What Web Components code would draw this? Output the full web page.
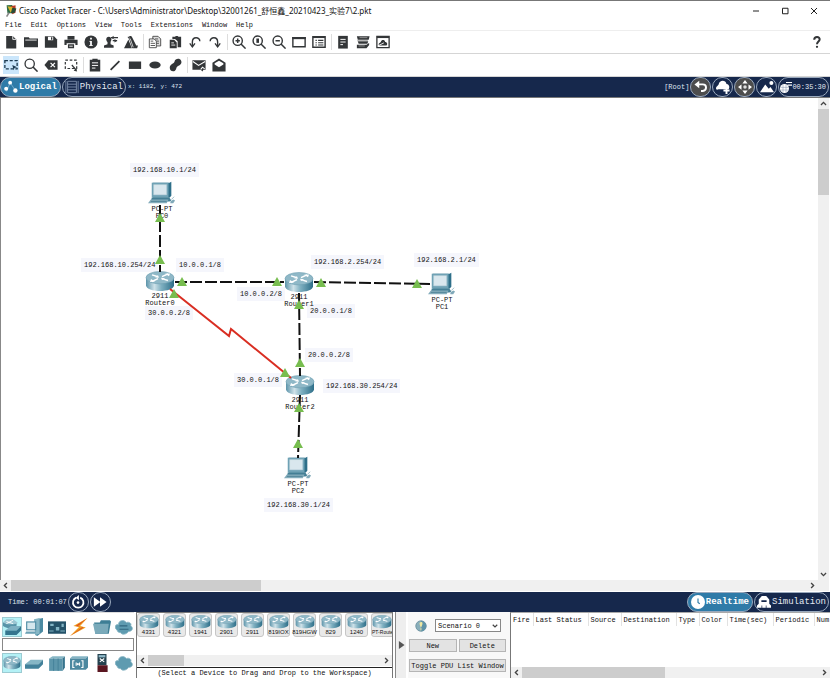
<!DOCTYPE html>
<html lang="en">
<head>
<meta charset="utf-8">
<title>Cisco Packet Tracer</title>
<style>
html,body{margin:0;height:100%}
body{font-family:"Liberation Mono","Noto Sans CJK SC",monospace;font-size:7px;line-height:8px;color:#111;background:#fff;overflow:hidden;
--navy:#16284c;--blue:#2f7ba8;--rail:#f0f0f0;--thumb:#cdcdcd}
</style>
</head>
<body>
<packet-app></packet-app>
<script>
const define = (name, html, setup) => {
  const t = document.createElement('template');
  t.innerHTML = `<style>*{box-sizing:border-box}button,input,select{font:inherit;color:inherit;margin:0;padding:0;border-radius:0}button{border:0;background:none;display:flex;align-items:center;justify-content:center;white-space:nowrap}</style>` + html;
  customElements.define(name, class extends HTMLElement {
    constructor() {
      super();
      this.attachShadow({mode: 'open'}).append(t.content.cloneNode(true));
      if (setup) this.setup = setup;
    }
    connectedCallback() { if (this.setup && !this.ready) { this.ready = true; this.setup(this.shadowRoot); } }
  });
};

/* Glyphs: toolbar icons share a 16x16 grid */
const I = {
  file: '<path fill="#333638" d="M2.500 1h7.500l4 4v10.500H2.500z"/><path d="M10 1v4h4" fill="none" stroke="#fff" stroke-width="1"/>',
  folder: '<path fill="#333638" d="M0 2.500h5.500l1 1.500H16v10H0z"/><path d="M1.500 5.800h13" stroke="#fff" stroke-width="1"/>',
  save: '<path fill="#333638" d="M1 1.500h10.500l3.500 3.500v9.500H1z"/><path fill="#fff" d="M4.500 2h6v4h-6z"/><path fill="#333638" d="M8 2.500h1.500v3H8z"/>',
  print: '<path fill="#333638" d="M4 1h8v4H4zM.5 5.500h15v6H13V9.500H3v2H.5zM4.500 10.500h7V15h-7z"/><path d="M6 12.800h4" stroke="#fff"/>',
  info: '<circle cx="8" cy="8" r="7.500" fill="#333638"/><path d="M8 3v2M8 6.800v5.200" stroke="#fff" stroke-width="2"/><path d="M6.200 7.300H8M6 12h4" stroke="#fff" stroke-width="1"/>',
  user: '<circle cx="5.500" cy="5" r="2.900" fill="#333638"/><path fill="#333638" d="M4 7h3.500v3.500L11 12v2.500H0V12l4-1.500z"/><path d="M8 3h8M10 6.500h5" stroke="#333638" stroke-width="1.300"/><path fill="#333638" d="M11 .8v4L8 3zM12 4.500v4l3-2z"/>',
  wizard: '<path fill="#333638" d="M6 1h2l1 1 5 10h2l-1 3H9.500L6 5zM5 5l4 10H0z"/><path d="M4.500 2L6 4M9 5l2 7" stroke="#333638" stroke-width="1.200"/><path d="M7 4l3.500 10" stroke="#fff" stroke-width=".8"/>',
  copy: '<path fill="#ddd" stroke="#444" d="M5.500 1.500h6l3 3v8h-9zM8 4.500h3.500M9 7h3.500M9 9.500h3.500"/><path fill="#fff" stroke="#444" d="M1.500 4.500h5.500l2.500 2.500v7.500h-8z"/><path stroke="#444" d="M3 7h3M3 9.500h5M3 12h5"/>',
  paste: '<path fill="#333638" d="M5 2h3l1-1h2l1 1h3v12H11V7L8 4.500H5z"/><path fill="#333638" d="M2 5.500h5l3 3V15H2z"/><path d="M3.800 9h3M3.800 11.500h4.500" stroke="#fff"/>',
  undo: '<path fill="none" stroke="#333638" stroke-width="1.600" d="M13.500 7c0-5-8.500-5.500-8.500 1v5"/><path fill="none" stroke="#333638" stroke-width="1.500" d="M2 9.500l3 4 3-4"/>',
  redo: '<path fill="none" stroke="#333638" stroke-width="1.600" d="M2.500 7c0-5 8.500-5.500 8.500 1v5"/><path fill="none" stroke="#333638" stroke-width="1.500" d="M8 9.500l3 4 3-4"/>',
  zoomin: '<circle cx="6.500" cy="6.500" r="5.300" fill="none" stroke="#333638" stroke-width="1.600"/><path d="M10 10l5.500 5.500M6.500 4v5M4 6.500h5" stroke="#333638" stroke-width="1.700"/>',
  zoomreset: '<circle cx="6.500" cy="6.500" r="5.300" fill="none" stroke="#333638" stroke-width="1.600"/><path d="M10 10l5.500 5.500" stroke="#333638" stroke-width="1.700"/><path fill="#333638" d="M5 4h3v5H5z"/>',
  zoomout: '<circle cx="6.500" cy="6.500" r="5.300" fill="none" stroke="#333638" stroke-width="1.600"/><path d="M10 10l5.500 5.500M4 6.500h5" stroke="#333638" stroke-width="1.700"/>',
  rectwin: '<path fill="none" stroke="#333638" stroke-width="1.600" d="M1 3h14v10.500H1z"/><path d="M.2 3.500h15.600" stroke="#333638" stroke-width="2.500"/>',
  list: '<path fill="none" stroke="#333638" stroke-width="1.600" d="M1 2h14v12H1z"/><path d="M1 2.500h14" stroke="#333638" stroke-width="2"/><path d="M4 6.200h1.500M7 6.200h6M4 8.800h1.500M7 8.800h6M4 11.400h1.500M7 11.400h6" stroke="#333638" stroke-width="1.300"/>',
  doc: '<path fill="#333638" d="M2.500 1h11v14.500h-11z"/><path d="M5 5h6M5 8h6M5 11h3" stroke="#fff" stroke-width="1.100"/>',
  stack: '<path fill="#333638" d="M1 1.500h14.500l-1 4H2zM2 7h12l-1 3H3zM1 11h11l3-2v2.500l-3 3.500H1z"/><path d="M1.500 6.500h12M3 12.500h7M4 3h9" stroke="#999"/>',
  image: '<path fill="none" stroke="#333638" stroke-width="1.500" d="M1 1.500h14v13H1z"/><path d="M1 2.500h14" stroke="#333638" stroke-width="2"/><path fill="#333638" d="M3 11c0-2 2-2 2.500-3 .7-3 4.500-3 5 0C13 8 13.500 11 12 12H4z"/><path d="M3 12l6-3" stroke="#fff"/>',
  help: '<path fill="none" stroke="#333638" stroke-width="2.300" d="M4.800 5.500C5 1 11.500 1.500 11 5.300 10.700 7.500 8 7.500 8 10.500"/><circle cx="8" cy="13.500" r="1.300" fill="#333638"/>',
  select: '<path fill="none" stroke="#1d3a50" stroke-width="1.500" stroke-dasharray="3.500 2" d="M1 3h14v9.500H1z"/><path fill="#1d3a50" d="M9.500 8l5.500 2.500-3 .8-1 2.700z"/>',
  lens: '<circle cx="6.500" cy="6.500" r="5.300" fill="none" stroke="#333638" stroke-width="1.500"/><path d="M10 10l5.500 5.500" stroke="#333638" stroke-width="1.800"/>',
  erase: '<path fill="#333638" d="M.5 8L5 2.500h10.500v11H5z"/><path d="M7.500 5.500l5 5m0-5l-5 5" stroke="#fff" stroke-width="1.400"/>',
  resize: '<path fill="none" stroke="#333638" stroke-width="1.400" stroke-dasharray="3 2" d="M1.500 2.500h13v9.500h-13z"/><path d="M9 8l5 6" stroke="#333638" stroke-width="1.400"/><path fill="#333638" d="M15 15.500l-4-1 3-2.500z"/>',
  note: '<path fill="#333638" d="M2 2h3V.8h6V2h3v13.500H2z"/><path d="M4.500 5.500h7M4.500 8.500h7M4.500 11.500h4" stroke="#fff" stroke-width="1.100"/>',
  line: '<path d="M3 13.500L13 3.500" stroke="#333638" stroke-width="2"/>',
  rect: '<path fill="#333638" d="M1 4h14v8.500H1z"/>',
  oval: '<ellipse cx="8" cy="8" rx="6.500" ry="4" fill="#333638"/>',
  blob: '<path fill="#333638" d="M15 3C13.500-.5 8 .5 7.500 4 7 6.500 2 7 2 11c0 4.500 5.500 5.500 7 2 .8-1.500.5-3 2.500-4C15 7.500 16 5.500 15 3z"/>',
  mail: '<path fill="#333638" d="M.5 2.500h15v11H13l-1 2-2-2H.5z"/><path fill="none" stroke="#fff" stroke-width="1.200" d="M1 4l6.500 4.500L15 4M10 13l2-2.500 2.500 2"/>',
  openmail: '<path fill="#333638" d="M.5 5.500L8 .5l7.500 5v10H.5z"/><path fill="#fff" d="M3 6l5-3 5 3v1.500L8 10.500 3 7.500z"/>',
  logo: '<path fill="#2e6a45" d="M2 1l7-.5L10 10l-7 1z"/><path fill="#b83a24" d="M7 2l6-1v9l-4 2z"/><path fill="#d7b62d" d="M3 2l6 1 2 5-4 2z"/><path fill="#294c38" d="M9 4l5 1-2 5-5 1z"/><path d="M5 10l-3 5" stroke="#888" stroke-width="2"/>',
  min: '<path d="M2 8h12" stroke="#222" stroke-width="2"/>',
  max: '<path d="M3 2.500h11v11H3z" fill="none" stroke="#222" stroke-width="2"/>',
  close: '<path d="M2 2l12 12m0-12L2 14" stroke="#222" stroke-width="2"/>',
  back: '<path fill="none" stroke="#fff" stroke-width="2.200" d="M4 5h6c5 0 5 7 0 7.500H8"/><path fill="#fff" d="M.5 5L6 .8v8.500z"/>',
  cloudadd: '<path fill="#fff" d="M0 9.500C0 7 2.500 6.500 3 5 4-.5 11-.5 12 4.500c3 0 4 3.500 2.500 6H3C1 11.500 0 11 0 9.500z"/><path d="M12 8v8M8.500 12h7" stroke="#fff" stroke-width="2.200"/>',
  move: '<path fill="#fff" d="M8 0l3 4H5zM8 16l3-4H5zM0 8l4-3v6zM16 8l-4-3v6z"/><circle cx="8" cy="8" r="2" fill="#ddd"/>',
  hills: '<path fill="#fff" d="M0 14L6 5l4 5 2-2 4 6z"/><circle cx="13" cy="3.500" r="2.300" fill="#fff"/>',
  globe: '<circle cx="6" cy="10" r="6" fill="#fff"/><path d="M1 8.500h10M1 12h10M4 5v10M8 5v10" stroke="#8293ad" stroke-width=".7"/><path d="M8 2h8M10 5.500h6" stroke="#fff" stroke-width="1.600"/>',
  logical: '<path d="M3 13L7 3l6 9" fill="none" stroke="#8fbdd8" stroke-width=".8"/><circle cx="7" cy="3" r="2.200" fill="#fff"/><circle cx="2.500" cy="10" r="2.300" fill="#fff"/><circle cx="13" cy="12" r="2.500" fill="#fff"/>',
  physical: '<path fill="none" stroke="#8192b0" d="M3 1.500h10v13H3zM1 1v14M15 1v14M3 4.800h10M3 8h10M3 11.200h10"/>',
  cycle: '<path fill="none" stroke="#fff" stroke-width="2" d="M6 3a6 6 0 1 0 4.500 0"/><path fill="#fff" d="M9 0v6L5.500 3z"/><circle cx="8" cy="8.700" r="1.500" fill="#fff"/>',
  forward: '<path fill="#fff" d="M1 2.500L8.500 8 1 13.500zM8 2.500L15.500 8 8 13.500z"/>',
  clock: '<circle cx="8" cy="8" r="8" fill="#fff"/><path d="M8 4v4.500l2 1.500" fill="none" stroke="#2f7ba8" stroke-width="1.300"/>',
  train: '<path fill="#fff" d="M2 5l3.500-4h5L14 5v5l2 2v2.500H0V12l2-2z"/><path d="M5 7h6" stroke="#16284c" stroke-width="2"/><path d="M5.500 12v3M10.500 12v3" stroke="#16284c" stroke-width=".8"/>',
  up: '<path d="M3.500 10.500L8 6l4.500 4.500" fill="none" stroke="#444" stroke-width="2.400"/>',
  down: '<path d="M3.500 5.500L8 10l4.500-4.500" fill="none" stroke="#444" stroke-width="2.400"/>',
  left: '<path d="M10.500 3.500L6 8l4.500 4.500" fill="none" stroke="#444" stroke-width="2.400"/>',
  right: '<path d="M5.500 3.500L10 8l-4.500 4.500" fill="none" stroke="#444" stroke-width="2.400"/>',
  play: '<path fill="#555" d="M2-1l13 9-13 9z"/>',
  tip: '<circle cx="8" cy="8" r="7" fill="#89aeba" stroke="#668b99"/><path d="M8 1a7 7 0 0 1 0 14" fill="#5f93a8"/><path fill="#efe7a0" d="M6 4c1-2 4-2 4 0 0 3-1 3-1 5H7c0-2-1-3-1-5z"/><path d="M7 11h2M7 13h2" stroke="#efe7a0"/>',
  gear: '<path fill="#9cc6d2" d="M0 4l3-3 6 0 4 3-2 4H3z"/><path fill="#5793a8" d="M0 4c3 2 8 2 12 1v3c-4 2-9 1-12-1z"/><path d="M3 3l6 2m0-3L3 5" stroke="#fff" stroke-width=".8"/><path fill="#7eb0c2" d="M2 11l5-4h9l-4 4z"/><path fill="#34758e" d="M2 11h10v4H2zM12 11l4-4v4l-4 4z"/>',
  host: '<path fill="#4b8aa2" d="M10 1l6-1v12l-5 4-2-1V3z"/><path fill="#86b6c5" d="M8 1l5-1v14l-4 1z"/><path fill="#4b8aa2" d="M1 3h9v8H1z"/><path fill="#d5e7ed" d="M2 4h7v6H2z"/><path fill="#6ba0b4" d="M1 12h9l-1 2H0z"/>',
  board: '<path fill="#245269" d="M0 3h16v11H0z"/><path fill="#83b5c6" d="M2 5h3v2H2zM7 8h3v3H7zM12 5h2v3h-2zM1 11h4v1H1zM11 11h4v1h-4z"/>',
  bolt: '<path fill="#efa01c" d="M15.500 0L3 7l5 1-8 8L14 8.500 9 7z"/><path fill="#dd4728" d="M15.500 0L5 7l6 1-11 8L12 8.500 7 7z"/>',
  files: '<path fill="#3d7e95" d="M1 4h5l1-2h8l1 1-2 11H2z"/><path fill="#7aaaba" d="M0 5h14l-1 9H2z"/>',
  cloud: '<path fill="#5e9bb0" stroke="#8cb7c5" stroke-width=".7" d="M2 11C-1 9 0 5 3 6c0-4 5-5 7-2 3-1 5 1 4 3 3 2 1 5-2 5-2 3-6 3-7 1-2 0-3-1-3-2z"/>',
  multi: '<path fill="#5e9bb0" stroke="#8cb7c5" stroke-width=".7" d="M2 11C-1 9 0 5 3 6c0-4 5-5 7-2 3-1 5 1 4 3 3 2 1 5-2 5-2 3-6 3-7 1-2 0-3-1-3-2z"/><path d="M4 7h7M4 10h8" stroke="#30677e"/>',
  switchy: '<path fill="#86b6c5" d="M0 9l5-4h11l-4 4z"/><path fill="#42819a" d="M0 9h12v4H0zM12 9l4-4v4l-4 4z"/>',
  hub: '<path fill="#86b6c5" d="M1 4l3-2h11l-2 2z"/><path fill="#5c96ab" d="M1 4h12v11H1z"/><path fill="#36738c" d="M13 4l2-2v10l-2 3z"/><path d="M5 4v11M9 4v11" stroke="#3f7d95" stroke-width=".7"/>',
  wireless: '<path fill="#85b4c4" d="M0 4l2-2h14l-2 2z"/><path fill="#4c889f" d="M0 4h14v10H0zM14 4l2-2v10l-2 2z"/><path fill="none" stroke="#fff" d="M4 6H2.500v6H4M10 6h1.500v6H10M5.500 7.500v3M8.500 7.500v3"/><circle cx="7" cy="9" r=".9" fill="#fff"/>',
  security: '<path fill="#24414e" d="M4 0h8v10H4z"/><path fill="#8fb9c8" d="M5 1h6v2H5z"/><path fill="#5a1620" d="M4 10h9v6H4z"/><path d="M6 4l4 3m-4 0l4-3" stroke="#fff"/>'
};
const routerSvg = `<svg viewBox="0 0 30 22" width="100%" height="100%" preserveAspectRatio="none"><defs><linearGradient id="r"><stop stop-color="#5c94aa"/><stop offset=".3" stop-color="#cfe2e9"/><stop offset=".55" stop-color="#7fb0c1"/><stop offset="1" stop-color="#2e6f89"/></linearGradient></defs><path fill="url(#r)" d="M1 7v8c0 8 28 8 28 0V7z"/><ellipse cx="15" cy="7" rx="14" ry="6.500" fill="#8fb8c7" stroke="#6b9db0" stroke-width=".6"/><path d="M7 4l6 2M23 10l-6-2M17 6l6-3M13 8l-6 3" stroke="#fff" stroke-width="1.500"/><path fill="#fff" d="M14 7l-4-.5 3-2zM16 7l4 .5-3 2zM25 2.500l-1 3-4-2.500zM5 11.500l1-3 4 2.500z"/></svg>`;
const pcSvg = `<svg viewBox="0 0 30 24" width="100%" height="100%"><path fill="#2e6f89" d="M5 1h18l2-1v15l-2 2H5z"/><path fill="#6fa2b5" d="M4 1h18v16H4z"/><path fill="#d9e7ee" stroke="#b5ced9" stroke-width=".5" d="M6 3h14v11H6z"/><path fill="#447f95" d="M4 17h19l2 3-2 1H3z"/><path fill="#83acbb" d="M3 19h19l-2 4H0z"/><path d="M3 21h17" stroke="#3c758b" stroke-width=".7"/><path fill="#80a9b9" d="M24 21l3-2 2 1-2 3h-3z"/><path d="M25 19l3-3" stroke="#9bbac5"/></svg>`;

define('ui-icon', `<style>:host{display:block;width:14px;height:14px;flex:none}svg{display:block}</style><span></span>`, function (r) {
  r.querySelector('span').innerHTML = `<svg viewBox="0 0 16 16" width="100%" height="100%" aria-hidden="true">${I[this.getAttribute('name')]}</svg>`;
  r.querySelector('span').style.cssText = 'display:block;height:100%';
});
define('tool-button', `<style>:host{display:flex;width:20px;height:20px;padding:1px 2px;flex:none}button{width:100%}:host([on]) button{background:#cbe6fb}</style><button></button>`, function (r) {
  const b = r.querySelector('button'), n = this.getAttribute('icon');
  b.setAttribute('aria-label', n);
  b.innerHTML = `<ui-icon name="${n}"></ui-icon>`;
});
const tools = s => s.split(' ').map(n => n === '|' ? '<i></i>' : n === '~' ? '<b></b>' : `<tool-button icon="${n.replace('*', '')}" ${n.includes('*') ? 'on' : ''}></tool-button>`).join('');
define('tool-row', `<style>:host{display:flex;align-items:center;height:23px;padding:0 3px 0 1px;border-bottom:1px solid #d5d5d5}::slotted(i){width:4px;height:16px;background:linear-gradient(90deg,transparent 2px,#ddd 2px,#ddd 3px,transparent 3px)}::slotted(b){flex:1}</style><slot></slot>`);

define('title-bar', `<style>:host{display:flex;align-items:center;height:20px;border-top:1px solid #777;padding:0 11px 0 5px;font:8px/14px "Noto Sans","Noto Sans CJK SC",sans-serif}
h1{font:inherit;margin:0 0 0 1px;flex:1;white-space:nowrap}nav{display:flex;gap:19px}button{width:10px;height:12px}nav ui-icon{width:8px;height:8px}ui-icon{width:13px}</style>
<ui-icon name="logo"></ui-icon><h1><slot></slot></h1><nav><button aria-label="Minimize"><ui-icon name="min"></ui-icon></button><button aria-label="Maximize"><ui-icon name="max"></ui-icon></button><button aria-label="Close"><ui-icon name="close"></ui-icon></button></nav>`);
define('menu-bar', `<style>:host{display:flex;gap:9px;padding:0 5px;height:11px;align-items:center;border-bottom:1px solid #eee}</style><slot></slot>`);
define('menu-item', `<style>:host{display:block}</style><button><slot></slot></button>`);

define('nav-pill', `<style>:host{display:flex;height:20px;flex:none}button{height:20px;min-width:21px;border:1px solid #9aa9bd;border-radius:10px;color:#e4e9f2;gap:1px;padding:0 2px;font-size:9px;background:transparent}:host([on]) button{background:var(--blue);font-weight:700;color:#fff;padding:0 3px}:host([round]) button{padding:0}:host([gray]) button{background:#4d4d4d}:host([small]) button{font-size:7px;padding:0 2px 0 1px;gap:0}:host([small]) ui-icon{width:12px}</style><button><span></span><slot></slot></button>`, function (r) {
  r.querySelector('span').innerHTML = `<ui-icon name="${this.getAttribute('icon')}"></ui-icon>`;
  if (!this.textContent) r.querySelector('button').setAttribute('aria-label', this.getAttribute('icon'));
});
define('nav-strip', `<style>:host{display:flex;align-items:center;height:20px;background:var(--navy);color:#dfe4ee;gap:1px;padding-right:1px;white-space:nowrap}::slotted(.grow){flex:1}</style><slot></slot>`);

define('scroll-rail', `<style>:host{display:flex;background:var(--rail);height:11px;align-items:center}ui-icon{width:9px;height:9px}div{flex:1;height:100%;display:flex}i{display:block;background:var(--thumb);height:100%;width:var(--size)}
button{width:11px;height:11px}:host([vertical]){flex-direction:column;width:11px;height:auto}:host([vertical]) i{width:100%;height:var(--size)}:host([vertical]) div{width:100%}</style><button aria-label="Back"></button><div><i></i></div><button aria-label="Forward"></button>`, function (r) {
  const v = this.hasAttribute('vertical'), b = r.querySelectorAll('button');
  b[0].innerHTML = `<ui-icon name="${v ? 'up' : 'left'}"></ui-icon>`;
  b[1].innerHTML = `<ui-icon name="${v ? 'down' : 'right'}"></ui-icon>`;
});

define('net-node', `<style>:host{position:absolute;display:flex;flex-direction:column;align-items:center;width:50px;line-height:7px;text-align:center}div{width:28px;height:24px;margin-bottom:1px}:host([kind=router]) div{width:30px;height:21px}</style><div></div><slot></slot>`, function (r) {
  r.querySelector('div').innerHTML = this.getAttribute('kind') === 'router' ? routerSvg : pcSvg;
});
define('net-label', `<style>:host{position:absolute;background:#f5f6fc;padding:3px;white-space:nowrap}</style><slot></slot>`);
const node = (k, x, y, a, b) => `<net-node kind="${k}" style="left:${x}px;top:${y}px"><span>${a}</span><span>${b}</span></net-node>`;
const label = (t, x, y) => `<net-label style="left:${x - 4}px;top:${y - 105}px">${t}</net-label>`;
const tri = [[160,217],[160,259],[182,281],[277,281],[321,282],[417,283],[299,304],[300,362],[299,407],[298,443],[174,293],[285,372]]
  .map(([x, y]) => `<path d="M${x} ${y - 102}l5 9h-10z"/>`).join('');
define('net-canvas', `<style>:host{display:block;position:relative;overflow:hidden;background:#fff;border-left:1px solid #888}svg.links{position:absolute;left:-1px;top:0;width:100%;height:100%;overflow:visible}</style>
${label('192.168.10.1/24',133,170)}${label('192.168.10.254/24',84,265)}${label('10.0.0.1/8',179,265)}${label('30.0.0.2/8',148,313)}${label('192.168.2.254/24',314,262)}${label('192.168.2.1/24',417,260)}${label('10.0.0.2/8',240,294)}${label('20.0.0.1/8',310,311)}${label('20.0.0.2/8',308,355)}${label('30.0.0.1/8',237,380)}${label('192.168.30.254/24',326,386)}${label('192.168.30.1/24',267,505)}
${node('pc', 136, 83, 'PC-PT', 'PC0')}${node('router', 134, 173, '2911', 'Router0')}${node('router', 273, 174, '2911', 'Router1')}${node('pc', 416, 174, 'PC-PT', 'PC1')}${node('router', 274, 277, '2911', 'Router2')}${node('pc', 272, 358, 'PC-PT', 'PC2')}
<svg class="links" aria-hidden="true"><g fill="none" stroke="#111" stroke-width="2" stroke-dasharray="12 3"><path d="M160 107L160 174M175 184H284M314 184L430 186M299 195L300 278M300 297L298 360"/></g><path fill="none" stroke="#d92e22" stroke-width="2" d="M170 191L229 238L231 231L291 280"/><g fill="#77bd4f">${tri}</g></svg>`);

define('kind-button', `<style>:host{display:block}button{width:20px;height:20px}:host([on]) button{background:#b4f1f6;border:1px solid #9ccbd2}ui-icon{width:18px;height:18px}</style><button></button>`, function (r) {
  const b = r.querySelector('button');
  b.innerHTML = `<ui-icon name="${this.getAttribute('icon')}"></ui-icon>`;
  if (this.getAttribute('icon') === 'router') b.innerHTML = `<span style="width:18px;height:14px;display:block">${routerSvg}</span>`;
  b.setAttribute('aria-label', this.getAttribute('icon'));
});
const kinds = s => s.split(' ').map((n, i) => `<kind-button icon="${n}" ${i ? '' : 'on'}></kind-button>`).join('');
define('kind-panel', `<style>:host{display:flex;flex-direction:column;width:134px;padding:4px 0 0 2px;gap:1px;border-top:1px solid #ddd}div{display:flex;justify-content:space-between}input{height:13px;width:132px;border:1px solid #888;background:#fff}.two{padding-top:1px}</style>
<div>${kinds('gear host board bolt files multi')}</div><input type="text" aria-label="Device search"><div class="two">${kinds('router switchy hub wireless security cloud')}</div>`);
define('device-tile', `<style>:host{display:block;flex:none}button{flex-direction:column;width:23px;height:24px;border:1px solid #c6c6c6;border-radius:3px;background:#e9e9e9;font:6px/7px "Liberation Sans",sans-serif}:host([long]) button{font-size:5px;align-items:flex-start;width:24px}i{display:block;width:20px;height:14px}</style><button><i></i><span><slot></slot></span></button>`, r => { r.querySelector('i').innerHTML = routerSvg; });
define('device-panel', `<style>:host{display:flex;flex-direction:column;width:257px;border:solid #777;border-width:1px 1px 0 1px;min-width:0}.tiles{display:flex;gap:3px;height:42px;overflow:hidden}p{margin:0;flex:1;border-top:1px solid #222;text-align:center;white-space:nowrap;padding-top:1px}scroll-rail{margin-bottom:1px;--size:36px}</style>
<div class="tiles">${'4331 4321 1941 2901 2911 819IOX 819HGW 829 1240 PT-Router'.split(' ').map(n => `<device-tile${n.length > 7 ? ' long' : ''}>${n}</device-tile>`).join('')}</div><scroll-rail></scroll-rail><p>(Select a Device to Drag and Drop to the Workspace)</p>`);
define('scenario-panel', `<style>:host{display:flex;flex-direction:column;width:102px;padding:7px 4px 0 1px;gap:7px;background:#f8f8f8}div{display:flex;gap:2px;align-items:center}.top{padding-left:6px;gap:8px}ui-icon{width:12px;height:12px}.top label{display:flex;position:relative}select{width:66px;height:13px;border:1px solid #888;background:#fff;appearance:none;padding-left:2px}.top label ui-icon{position:absolute;right:2px;top:3px;width:8px;height:8px;pointer-events:none}button{border:1px solid #b5b5b5;background:#e3e3e3;height:13px;flex:1}.wide{flex:none}</style>
<div class="top"><ui-icon name="tip"></ui-icon><label><select aria-label="Scenario"><option>Scenario 0</option></select><ui-icon name="down"></ui-icon></label></div><div><button>New</button><button>Delete</button></div><button class="wide">Toggle PDU List Window</button>`);
define('pdu-list', `<style>:host{display:flex;flex-direction:column;flex:1;min-width:0;border-left:1px solid #777;border-top:1px solid #aaa;overflow:hidden}.t{flex:1;overflow:hidden}table{border-collapse:collapse;table-layout:fixed;width:336px}th{font-weight:400;text-align:left;padding:0 0 0 2px;height:13px;border-right:1px solid #e2e2e2;white-space:nowrap}scroll-rail{--size:143px}</style>
<div class="t"><table><colgroup>${[22,55,33,55,23,28,46,41,33].map(w => `<col style="width:${w}px">`).join('')}</colgroup><thead><tr>${['Fire','Last Status','Source','Destination','Type','Color','Time(sec)','Periodic','Num'].map(h => `<th scope="col">${h}</th>`).join('')}</tr></thead></table></div><scroll-rail></scroll-rail>`);

define('packet-app', `<style>:host{display:flex;flex-direction:column;height:100vh}.work{flex:1;display:grid;grid-template-columns:minmax(0,1fr) 11px;grid-template-rows:minmax(0,1fr) 11px;min-height:0;padding-right:1px;border-top:1px solid #777}.work>.h{--size:250px}.work>.v{--size:86px}.corner{background:var(--rail)}
.bottom{display:flex;height:66px;overflow:hidden;gap:2px}.split{width:11px;background:#eee;border-left:1px solid #888}.split ui-icon{width:7px;height:8px}.side{display:flex;flex:1;min-width:0}.xy{font-size:6px;padding-left:1px}.time{padding-left:8px}.sim{margin-top:1px}.grow{flex:1}</style>
<title-bar>Cisco Packet Tracer - C:\\Users\\Administrator\\Desktop\\32001261_舒恒鑫_20210423_实验7\\2.pkt</title-bar>
<menu-bar>${'File Edit Options View Tools Extensions Window Help'.split(' ').map(m => `<menu-item>${m}</menu-item>`).join('')}</menu-bar>
<tool-row>${tools('file folder save print info user wizard | copy paste undo redo | zoomin zoomreset zoomout rectwin list | doc stack image ~ help')}</tool-row>
<tool-row>${tools('select* lens erase resize | note line rect oval blob | mail openmail')}</tool-row>
<nav-strip><nav-pill icon="logical" on>Logical</nav-pill><nav-pill icon="physical">Physical</nav-pill><span class="xy">x: 1182, y: 472</span><span class="grow"></span><span>[Root]</span><nav-pill icon="back" round gray></nav-pill><nav-pill icon="cloudadd" round></nav-pill><nav-pill icon="move" round gray></nav-pill><nav-pill icon="hills" round></nav-pill><nav-pill icon="globe" small>00:35:30</nav-pill></nav-strip>
<div class="work"><net-canvas></net-canvas><scroll-rail class="v" vertical></scroll-rail><scroll-rail class="h"></scroll-rail><span class="corner"></span></div>
<nav-strip class="sim"><span class="time">Time: 00:01:07</span><nav-pill icon="cycle" round></nav-pill><nav-pill icon="forward" round></nav-pill><span class="grow"></span><nav-pill icon="clock" on>Realtime</nav-pill><nav-pill icon="train">Simulation</nav-pill></nav-strip>
<div class="bottom"><kind-panel></kind-panel><device-panel></device-panel><button class="split" aria-label="Toggle panel"><ui-icon name="play"></ui-icon></button><div class="side"><scenario-panel></scenario-panel><pdu-list></pdu-list></div></div>`);
</script>
</body>
</html>
